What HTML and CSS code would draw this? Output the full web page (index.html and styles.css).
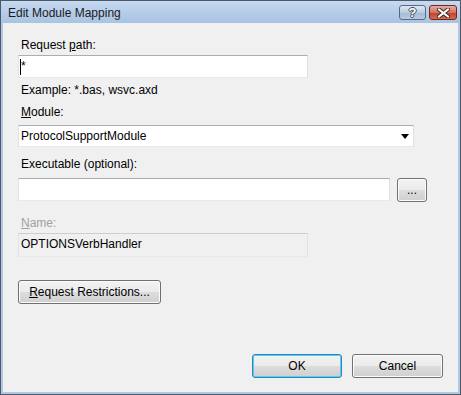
FILE: index.html
```html
<!DOCTYPE html>
<html lang="en">
<head>
    <meta charset="UTF-8">
    <title>Edit Module Mapping</title>
    <link rel="stylesheet" href="styles.css">
</head>
<body>
    <div class="window">
        <div class="titlebar">
            <span class="title">Edit Module Mapping</span>
            <div class="caption-buttons">
                <span class="cap-btn help">?</span>
                <span class="cap-btn close">
                    <svg width="13" height="10" viewBox="0 0 13 10">
                        <path d="M2 1.5 L11 8.5 M11 1.5 L2 8.5" stroke="#3a2a28" stroke-width="4" stroke-linecap="square"/>
                        <path d="M2 1.5 L11 8.5 M11 1.5 L2 8.5" stroke="#ffffff" stroke-width="2" stroke-linecap="square"/>
                    </svg>
                </span>
            </div>
        </div>

        <div class="client">
            <!-- request path -->
            <label class="lbl">Request <u>p</u>ath:</label>
            <div class="textbox path-box"><span class="caret"></span>*</div>
            <div class="hint">Example: *.bas, wsvc.axd</div>

            <!-- module -->
            <label class="lbl module-lbl"><u>M</u>odule:</label>
            <div class="combo">
                <span>ProtocolSupportModule</span>
                <span class="arrow"></span>
            </div>

            <!-- executable -->
            <label class="lbl exec-lbl">Executable (optional):</label>
            <div class="exec-row">
                <div class="textbox exec-box"></div>
                <button class="btn browse-btn">...</button>
            </div>

            <!-- name -->
            <label class="lbl name-lbl disabled"><u>N</u>ame:</label>
            <div class="textbox name-box">OPTIONSVerbHandler</div>

            <button class="btn restrict-btn"><u>R</u>equest Restrictions...</button>

            <div class="footer">
                <button class="btn ok-btn">OK</button>
                <button class="btn cancel-btn">Cancel</button>
            </div>
        </div>
    </div>
</body>
</html>
```

FILE: styles.css
```css
body {
    margin: 0;
    background-color: #ffffff;
    font-family: "Liberation Sans", Arial, sans-serif;
    font-size: 12px;
    color: #000;
}

.window {
    width: 461px;
    height: 395px;
    box-sizing: border-box;
    border: 1px solid #4d5966;
    background-color: #aec8e6;
    display: flex;
    flex-direction: column;
}

.titlebar {
    height: 22px;
    flex-shrink: 0;
    display: flex;
    justify-content: space-between;
    background: linear-gradient(#c6daf0, #b3cbe8 60%, #a9c3e2);
}

.title {
    padding-left: 7px;
    padding-top: 5px;
    font-size: 12px;
    line-height: 14px;
    color: #1b1b1b;
}

.caption-buttons {
    display: flex;
    gap: 3px;
    padding-top: 4px;
    padding-right: 3px;
}

.cap-btn {
    height: 13px;
    border: 1px solid #596a80;
    border-radius: 3px;
    display: flex;
    align-items: center;
    justify-content: center;
}

.help {
    width: 25px;
    background: linear-gradient(#dfe8f3, #b9cce2 50%, #a4bbd7 51%, #b6cbe3);
    color: #ffffff;
    font-weight: bold;
    font-size: 13px;
    text-shadow: 1px 0 0 #3f4b5a, -1px 0 0 #3f4b5a, 0 1px 0 #3f4b5a, 0 -1px 0 #3f4b5a;
}

.close {
    width: 26px;
    border-color: #6b2a22;
    background: linear-gradient(#e8aba0, #d4715f 50%, #c2402a 51%, #d8684f);
}

.client {
    flex: 1;
    margin: 0 2px 2px 2px;
    background-color: #f0f0f0;
    padding: 15px 15px 14px 15px;
    display: flex;
    flex-direction: column;
    align-items: flex-start;
}

.lbl {
    display: block;
    line-height: 15px;
    padding-left: 3px;
}

.lbl.disabled {
    color: #a0a0a0;
}

.textbox {
    box-sizing: border-box;
    height: 23px;
    background-color: #fff;
    border: 1px solid;
    border-color: #abadb3 #dbdfe6 #e3e9ef #e2e3ea;
    padding: 3px 2px;
    line-height: 15px;
}

.path-box {
    width: 290px;
    margin-top: 2px;
    display: flex;
    align-items: center;
    padding-left: 1px;
}

.caret {
    width: 1px;
    height: 16px;
    background-color: #000;
    margin-right: 0;
}

.hint {
    margin-top: 5px;
    padding-left: 3px;
    line-height: 15px;
}

.module-lbl {
    margin-top: 7px;
}

.combo {
    box-sizing: border-box;
    width: 396px;
    height: 22px;
    margin-top: 5px;
    background-color: #fff;
    border: 1px solid;
    border-color: #abadb3 #dbdfe6 #e3e9ef #e2e3ea;
    padding: 0 4px 0 2px;
    display: flex;
    align-items: center;
    justify-content: space-between;
}

.arrow {
    width: 0;
    height: 0;
    border-left: 4px solid transparent;
    border-right: 4px solid transparent;
    border-top: 5px solid #000;
}

.exec-lbl {
    margin-top: 10px;
}

.exec-row {
    margin-top: 6px;
    display: flex;
    gap: 7px;
    align-items: flex-start;
}

.exec-box {
    width: 372px;
}

.btn {
    box-sizing: border-box;
    height: 24px;
    border: 1px solid #707070;
    border-radius: 3px;
    background: linear-gradient(#f2f2f2, #ebebeb 50%, #dddddd 51%, #cfcfcf);
    box-shadow: inset 0 0 0 1px #fcfcfc;
    font-family: "Liberation Sans", Arial, sans-serif;
    font-size: 12px;
    color: #000;
    padding: 0;
}

.browse-btn {
    width: 30px;
    line-height: 14px;
}

.name-lbl {
    margin-top: 14px;
}

.name-box {
    width: 290px;
    margin-top: 2px;
    height: 24px;
    background-color: #f0f0f0;
    border-color: #cfcfcf #e3e3e3 #e8e8e8 #e3e3e3;
}

.restrict-btn {
    width: 143px;
    margin-top: 23px;
}

.footer {
    margin-top: auto;
    align-self: flex-end;
    display: flex;
    gap: 10px;
}

.ok-btn {
    width: 90px;
    border-color: #3c7fb1;
    box-shadow: inset 0 0 0 1px #48d3ff;
}

.cancel-btn {
    width: 91px;
}
```
